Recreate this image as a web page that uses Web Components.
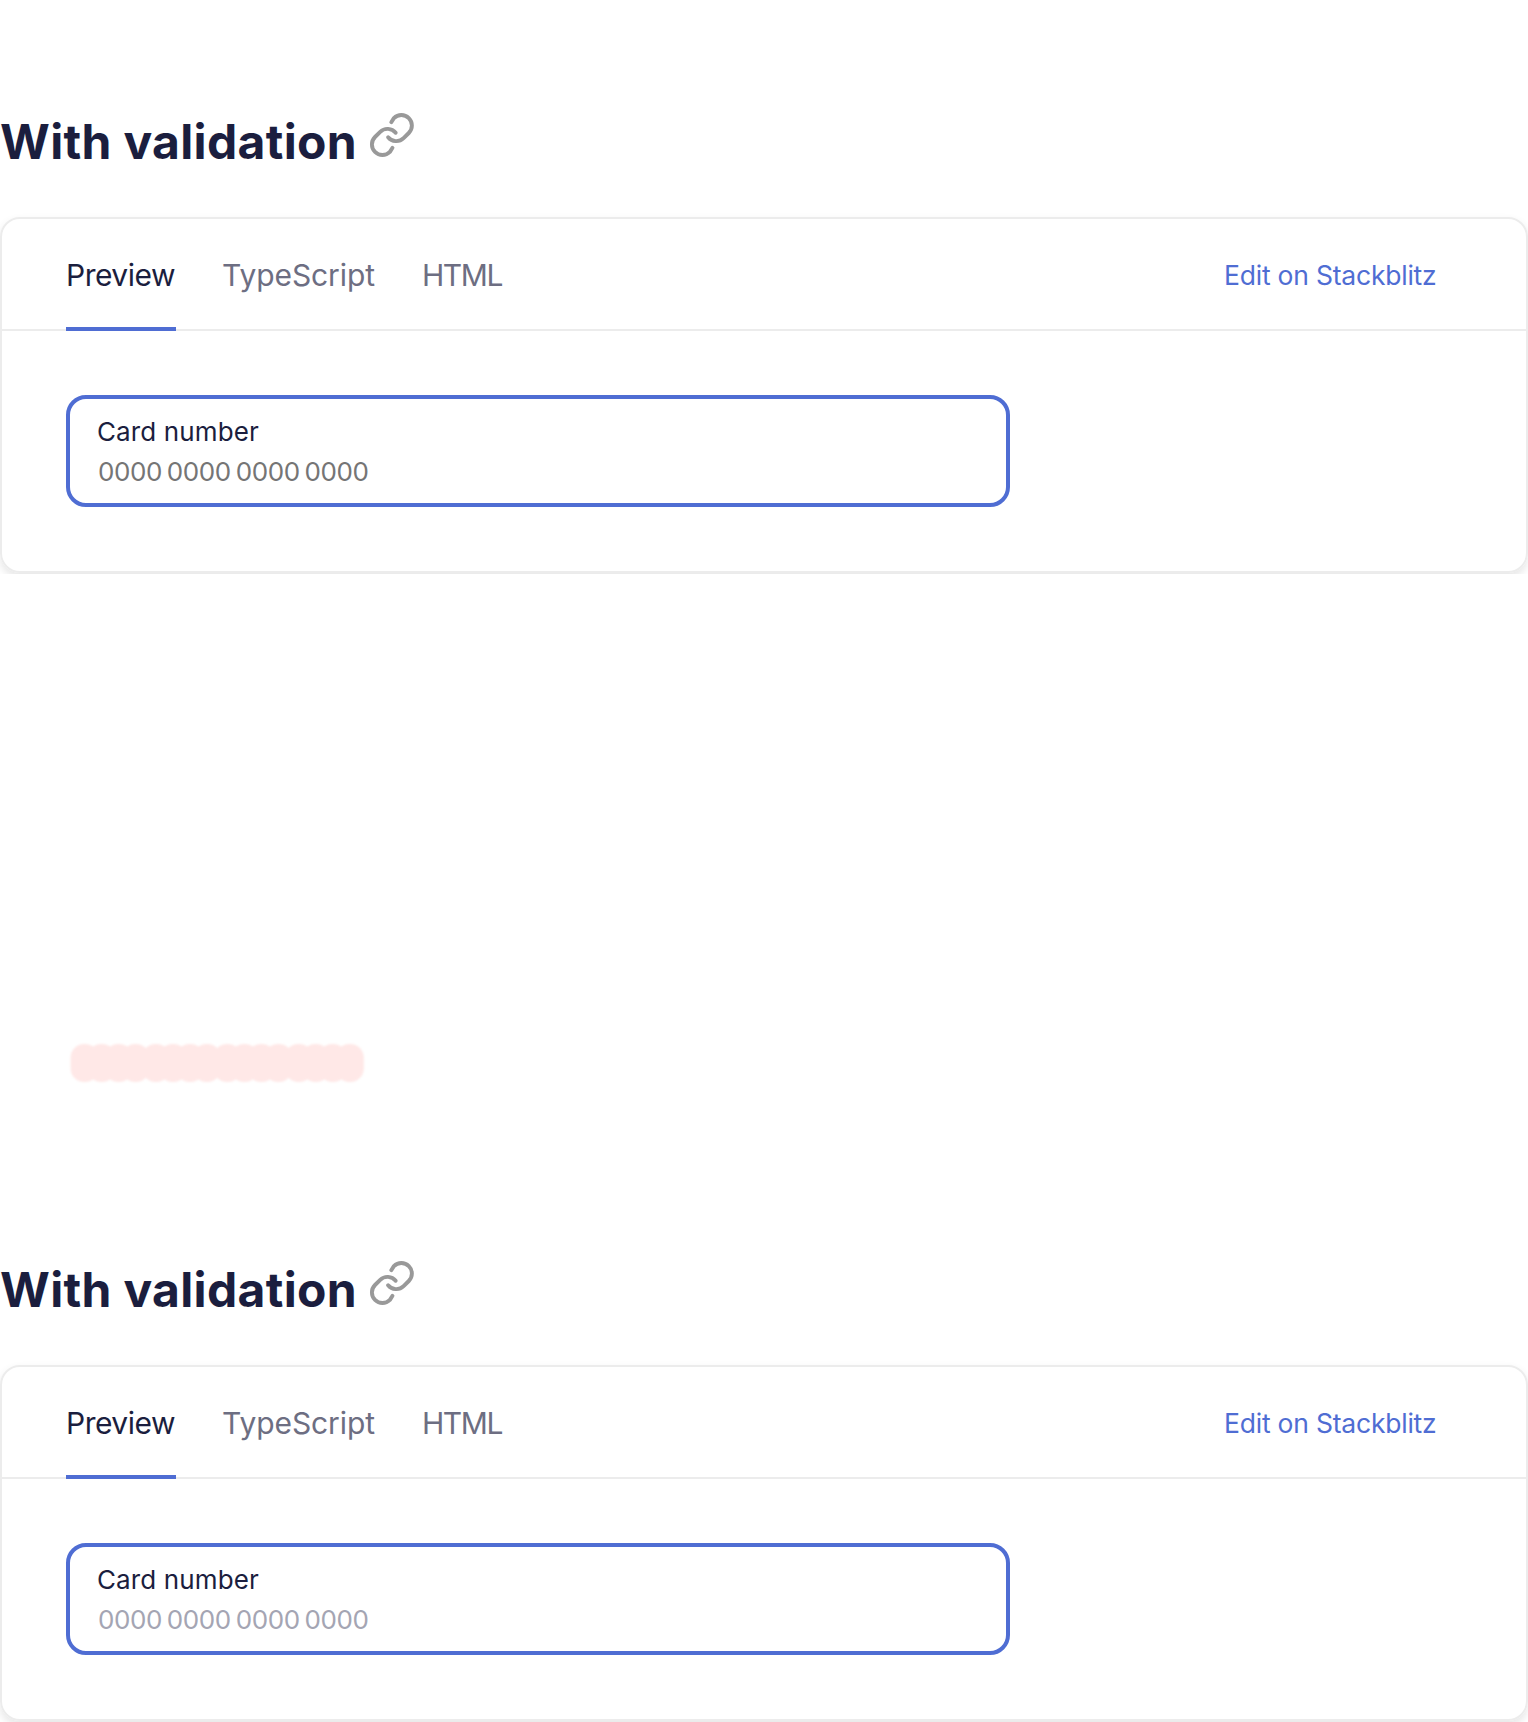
<!DOCTYPE html>
<html lang="en">
<head>
<meta charset="utf-8">
<title>With validation</title>
<style>
html,body{margin:0;background:#fff}
body{width:1528px;height:1722px;overflow:hidden;font-family:Inter,"Open Sans",sans-serif;color:#1b1e3e}
</style>
</head>
<body>
<demo-frame><demo-section></demo-section></demo-frame>
<demo-frame><diff-mark></diff-mark></demo-frame>
<demo-frame><demo-section style="--placeholder:#a4a5b3"></demo-section></demo-frame>
<script>
function define(name, html, ready) {
  customElements.define(name, class extends HTMLElement {
    constructor() { super(); this.attachShadow({mode: 'open'}).innerHTML = html; }
    connectedCallback() { if (ready) ready(this); }
  });
}

// Text tracked so that its advance equals the "w" attribute.
define('tracked-text', `<style>:host{display:block;white-space:nowrap}span{display:inline-block}</style><span></span>`, el => {
  const s = el.shadowRoot.querySelector('span');
  const t = el.getAttribute('text'), w = +el.getAttribute('w');
  s.textContent = t;
  el.style.width = (el.getAttribute('box') || w) + 'px';
  s.style.letterSpacing = ((w - s.getBoundingClientRect().width) / t.length) + 'px';
});

define('link-icon', `<style>:host{display:block;width:70px;height:70px}svg{display:block}</style>
<svg width="70" height="70" viewBox="0 0 70 70" fill="none" stroke="#999" stroke-width="3.9" stroke-linecap="round">
<path d="M31.3 22.2L33.9 18.1A10.5 10.5 0 0 1 48.8 33L43.6 38.2A10.5 10.5 0 0 1 28.1 37.2"/>
<path transform="rotate(180 31.9 35)" d="M31.3 22.2L33.9 18.1A10.5 10.5 0 0 1 48.8 33L43.6 38.2A10.5 10.5 0 0 1 28.1 37.2"/></svg>`);

define('section-heading', `<style>:host{display:flex;height:117px;padding-top:100px;box-sizing:content-box}
tracked-text{font-size:48px;font-weight:700;line-height:60px;padding-top:12px;margin-right:2px}</style>
<tracked-text text="With validation" w="357" box="358"></tracked-text><link-icon></link-icon>`);

define('tab-bar', `<style>:host{display:flex;height:110px;padding:0 88px 0 64px;border-bottom:2px solid #ececec;font-size:30px;line-height:110px;color:#6d6e82}
.tabs{display:flex;gap:46px;flex:1}
.tab{height:112px;box-sizing:border-box;padding-top:1px}
.active{color:#1b1e3e;box-shadow:inset 0 -4px #4f6dd3}
.edit{font-size:26.5px;color:#4f6dd3;padding-top:1px;height:109px}</style>
<div class="tabs"><tracked-text class="tab active" text="Preview" w="109" box="110"></tracked-text>
<tracked-text class="tab" text="TypeScript" w="153" box="154"></tracked-text>
<tracked-text class="tab" text="HTML" w="80" box="81"></tracked-text></div>
<tracked-text class="edit" text="Edit on Stackblitz" w="212.5" box="214"></tracked-text>`);

define('card-input', `<style>:host{display:block;box-sizing:border-box;width:944px;height:112px;border:4px solid #4f6dd3;border-radius:20px;padding:13px 27px 11px 27px;font-size:26px;line-height:40px}
.ph{color:var(--placeholder,#757575);word-spacing:-2px;padding-left:1px}</style>
<tracked-text text="Card number" w="162"></tracked-text>
<tracked-text class="ph" text="0000 0000 0000 0000" w="270.5"></tracked-text>`);

define('demo-card', `<style>:host{display:block;box-sizing:border-box;height:356px;border:2px solid #ececec;border-radius:20px;box-shadow:0 4px 8px rgba(0,0,0,.1)}
.body{padding:64px}</style><tab-bar></tab-bar><div class="body"><slot></slot></div>`);

define('demo-section', `<style>:host{display:block}</style><section-heading></section-heading><demo-card><card-input></card-input></demo-card>`);

define('demo-frame', `<style>:host{display:block;height:574px;overflow:hidden}</style><slot></slot>`);

// Soft highlight made of four groups of four overlapping pills.
define('diff-mark', `<style>:host{display:block;padding:463px 0 0 60px}svg{display:block;filter:blur(1.3px)}</style><svg width="320" height="60" fill="#ffe8e7"></svg>`, el => {
  let out = '';
  for (let g = 0; g < 4; g++) for (let i = 0; i < 4; i++)
    out += `<rect x="${10.6 + g * 71.4 + i * 17}" y="7" width="28" height="38" rx="13.5" ry="13.5"/>`;
  el.shadowRoot.querySelector('svg').innerHTML = out;
});
</script>
</body>
</html>
